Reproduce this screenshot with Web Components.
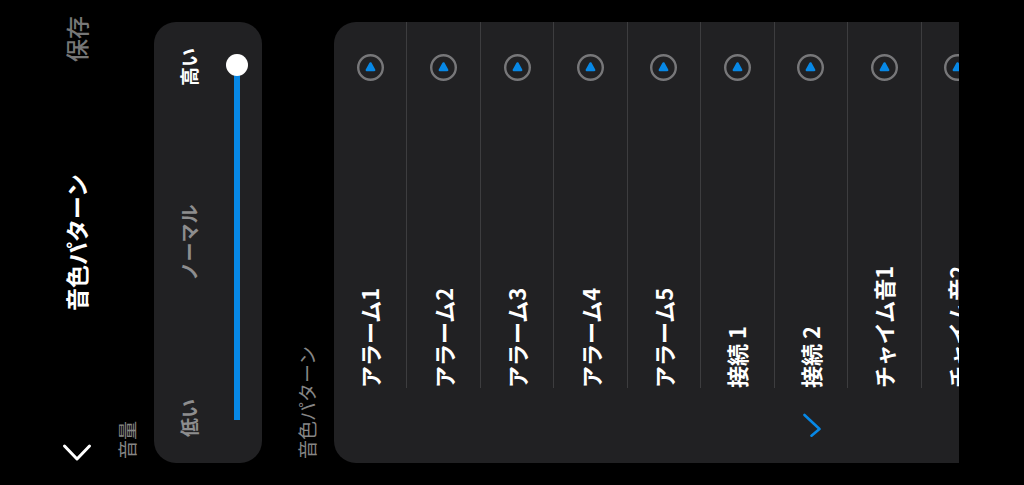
<!DOCTYPE html>
<html lang="ja">
<head>
<meta charset="utf-8">
<meta name="viewport" content="width=device-width, initial-scale=1">
<title>音色パターン</title>
<style>
  html, body { margin: 0; height: 100%; background: #000; overflow: hidden; }
  body { font-family: "Noto Sans CJK JP", "Noto Sans", sans-serif; color: #fff; }
</style>
</head>
<body>
<tone-screen>
  <tone-header slot="header">音色パターン</tone-header>
  <tone-section heading="音量">
    <tone-volume value="100">
      <span slot="low">低い</span>
      <span slot="mid">ノーマル</span>
      <span slot="high">高い</span>
    </tone-volume>
  </tone-section>
  <tone-section heading="音色パターン" fill>
    <tone-list>
      <tone-row>アラーム1</tone-row>
      <tone-row>アラーム2</tone-row>
      <tone-row>アラーム3</tone-row>
      <tone-row>アラーム4</tone-row>
      <tone-row>アラーム5</tone-row>
      <tone-row>接続 1</tone-row>
      <tone-row checked>接続 2</tone-row>
      <tone-row>チャイム音1</tone-row>
      <tone-row>チャイム音2</tone-row>
    </tone-list>
  </tone-section>
</tone-screen>

<script>
const define = (name, html, setup) => {
  const template = document.createElement('template');
  template.innerHTML = html;
  customElements.define(name, class extends HTMLElement {
    constructor() {
      super();
      this.attachShadow({ mode: 'open' }).append(template.content.cloneNode(true));
    }
    connectedCallback() { if (setup) setup(this, this.shadowRoot); }
  });
};

/* Portrait screen turned a quarter counter-clockwise to fill a landscape window. */
define('tone-screen', `
  <style>
    :host {
      display: flex; flex-direction: column; box-sizing: border-box;
      width: 100vh; height: 100vw; padding: 54px 22px 65px;
      margin-bottom: calc(100vh - 100vw);
      transform-origin: 0 0; transform: translateY(100vh) rotate(-90deg);
    }
    main { flex: 1; min-height: 0; display: flex; flex-direction: column; gap: 20px; }
  </style>
  <slot name="header"></slot>
  <main><slot></slot></main>`);

define('tone-header', `
  <style>
    :host { display: grid; grid-template-columns: 1fr auto 1fr; align-items: center; height: 48px; }
    button { border: 0; padding: 0; background: none; font: inherit; cursor: pointer; }
    .back { justify-self: start; display: flex; }
    h1, .save { margin: 0; padding-bottom: 4px; font-size: 23px; line-height: 32px; }
    h1 { font-weight: 700; }
    .save { justify-self: end; margin-right: -6px; font-weight: 500; color: #777; }
    svg { fill: none; stroke: #fff; stroke-width: 3; stroke-linecap: round; stroke-linejoin: round; }
  </style>
  <button class="back" aria-label="戻る"><svg width="22" height="32" viewBox="0 0 22 32"><path d="M17 2.5L4 15L17 27.5"/></svg></button>
  <h1><slot></slot></h1>
  <button class="save">保存</button>`);

define('tone-section', `
  <style>
    :host { display: flex; flex-direction: column; gap: 15px; padding-top: 13px; }
    :host([fill]) { flex: 1; min-height: 0; }
    h2 { margin: 0; padding-left: 4px; font-size: 19px; line-height: 24px; font-weight: 400; color: #868686; }
  </style>
  <h2></h2>
  <slot></slot>`,
  (host, root) => { root.querySelector('h2').textContent = host.getAttribute('heading'); });

define('tone-volume', `
  <style>
    :host { display: flex; flex-direction: column; gap: 25px; padding: 23px 26px 14px; border-radius: 22px; background: #212123; }
    .scale { display: grid; grid-template-columns: 1fr auto 1fr; font-size: 19px; line-height: 24px; font-weight: 700; color: #8d8d8e; }
    .high { justify-self: end; color: #fff; }
    input {
      --level: 100%;
      appearance: none; display: block; height: 22px; margin: 0 6px 0 17px; background:
        linear-gradient(90deg, #0788e6 var(--level), #48484a 0) center / 100% 6px no-repeat;
      border-radius: 3px;
    }
    input::-webkit-slider-thumb { appearance: none; width: 22px; height: 22px; border-radius: 50%; background: #fff; }
  </style>
  <div class="scale">
    <slot name="low"></slot>
    <slot name="mid"></slot>
    <div class="high"><slot name="high"></slot></div>
  </div>
  <input type="range" min="0" max="100" aria-label="音量">`,
  (host, root) => {
    const input = root.querySelector('input');
    const paint = () => input.style.setProperty('--level', (input.value < 100 ? input.value : 96) + '%');
    input.value = host.getAttribute('value');
    input.addEventListener('input', paint);
    paint();
  });

define('tone-list', `
  <style>
    :host {
      display: grid; grid-auto-rows: calc(100% / 8.51); flex: 1; min-height: 0;
      overflow: hidden; border-radius: 22px 22px 0 0; background: #212123;
    }
  </style>
  <slot></slot>`,
  host => host.addEventListener('pick', e => {
    for (const row of host.children) row.toggleAttribute('checked', row === e.target);
    for (const row of host.children) row.shadowRoot.querySelector('input').checked = row === e.target;
  }));

define('tone-row', `
  <style>
    :host { display: grid; grid-template-columns: 75px 1fr; }
    .mark { display: grid; place-items: center; }
    .mark > * { grid-area: 1 / 1; }
    input { appearance: none; width: 24px; height: 24px; margin: 0; }
    .check { visibility: hidden; pointer-events: none; fill: none; stroke: #0788e6; stroke-width: 2.6; stroke-linecap: round; stroke-linejoin: round; }
    input:checked + .check { visibility: visible; }
    .body { display: flex; align-items: center; padding-right: 32px; border-bottom: 1px solid #3d3d3f; }
    label { flex: 1; padding-bottom: 2px; font-size: 22px; line-height: 32px; font-weight: 700; }
    button { border: 0; padding: 0; background: none; display: flex; cursor: pointer; }
  </style>
  <div class="mark">
    <input type="radio" id="pick">
    <svg class="check" width="24" height="24" viewBox="0 0 24 24"><path d="M1.3 12.5L8 20.5L22 5.5"/></svg>
  </div>
  <div class="body">
    <label for="pick"><slot></slot></label>
    <button aria-label="再生"><svg width="27" height="27" viewBox="0 0 27 27">
      <circle cx="13.5" cy="13.5" r="12.3" fill="none" stroke="#777779" stroke-width="2.4"/>
      <path d="M11 9.8L17.6 13.5L11 17.2Z" fill="#0788e6" stroke="#0788e6" stroke-width="2.4" stroke-linejoin="round"/>
    </svg></button>
  </div>`,
  (host, root) => {
    const input = root.querySelector('input');
    input.checked = host.hasAttribute('checked');
    input.addEventListener('change', () => host.dispatchEvent(new CustomEvent('pick', { bubbles: true })));
  });
</script>
</body>
</html>
